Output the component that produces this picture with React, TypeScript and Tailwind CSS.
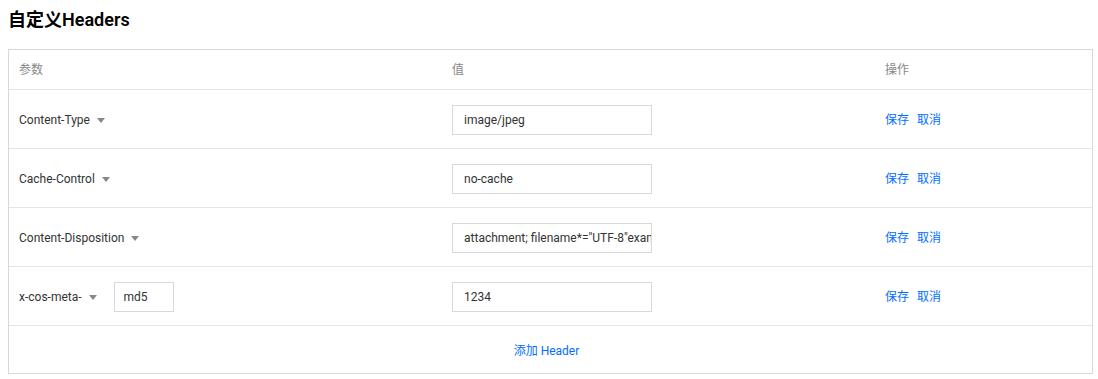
import React from "react";

const font = { fontFamily: 'Roboto, "Noto Sans CJK SC", sans-serif' };

function Caret() {
  return (
    <svg width="8" height="5" viewBox="0 0 8 5" className="ml-[7px] mt-[1px]">
      <path d="M0 0 L8 0 L4 5 Z" fill="#888888" />
    </svg>
  );
}

function Row({ name, value, extra }: { name: string; value: string; extra?: string }) {
  return (
    <div className="flex h-[59px] items-center border-t border-[#e5e5e5] pt-[1px]">
      <div className="flex w-[443px] items-center pl-[10px] pt-[1px]">
        <span className="text-[12px] text-[#333]">{name}</span>
        <Caret />
        {extra && (
          <div className="ml-[17px] flex h-[30px] w-[60px] items-center border border-[#d5d8dc] pl-[9px] text-[12px] text-[#333]">
            {extra}
          </div>
        )}
      </div>
      <div className="w-[433px]">
        <div className="flex h-[30px] w-[200px] items-center overflow-hidden whitespace-nowrap border border-[#d5d8dc] px-[11px] text-[12px] text-[#333]">
          {value}
        </div>
      </div>
      <div className="flex gap-[8px] pt-[1px] text-[12px] text-[#006eff]">
        <span>保存</span>
        <span>取消</span>
      </div>
    </div>
  );
}

export default function App() {
  return (
    <div className="bg-white pl-[8px] pt-[7px] h-[379px]" style={font}>
      <h2 className="text-[18px] font-semibold leading-[26px] text-[#000]">自定义Headers</h2>
      <div className="mt-[16px] w-[1085px] border border-[#d5d8dc]">
        <div className="flex h-[39px] items-center text-[12px] text-[#888]">
          <div className="w-[443px] pl-[10px]">参数</div>
          <div className="w-[433px]">值</div>
          <div>操作</div>
        </div>
        <Row name="Content-Type" value="image/jpeg" />
        <Row name="Cache-Control" value="no-cache" />
        <Row name="Content-Disposition" value={'attachment; filename*="UTF-8"example.jpg'} />
        <Row name="x-cos-meta-" value="1234" extra="md5" />
        <div className="flex h-[48px] items-center justify-center border-t border-[#e5e5e5] pr-[8px] pt-[2px] text-[12px] text-[#006eff]">
          添加 Header
        </div>
      </div>
    </div>
  );
}
